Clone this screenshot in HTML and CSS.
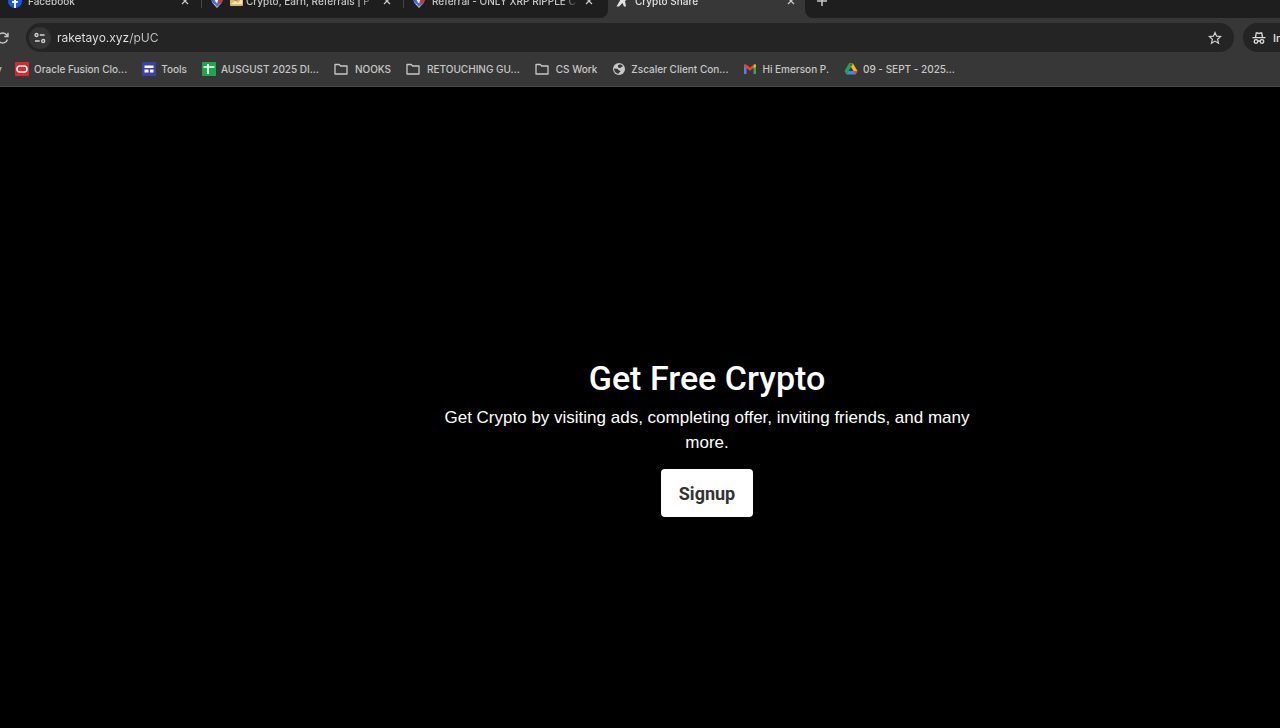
FILE: index.html
```html
<!DOCTYPE html>
<html lang="en">
<head>
  <meta charset="UTF-8" />
  <meta name="viewport" content="width=device-width, initial-scale=1.0" />
  <title>Crypto Share</title>
  <link rel="stylesheet" href="styles.css">
</head>
<body>

<!-- shared favicon -->
<svg class="defs" width="0" height="0" aria-hidden="true">
  <symbol id="coin" viewBox="0 0 14 14">
    <path d="M1 2.500 7 0l6 2.500-1 6L7 14 2 8.500z" fill="#c9cdda"/>
    <path d="M1 2.500 5 1v9L2.500 9z" fill="#3459c4"/>
    <path d="M8 1l5 1.500-1 6L8 12z" fill="#c9383b"/>
    <path d="M4 4l6 5-3 4-4-5z" fill="#4c6ed0"/>
    <path d="M4.500 2.500 8.500 5 7 9.500 5 7z" fill="#f2f2f2"/>
  </symbol>
  <symbol id="folder" viewBox="0 0 14 14">
    <path d="M1 2.500h4.200l1.500 1.500H13v8H1z" fill="none" stroke="#c7c7c7" stroke-width="1.300" stroke-linejoin="round"/>
  </symbol>
  <symbol id="close" viewBox="0 0 8 8">
    <path d="M1 1l6 6M7 1L1 7" stroke="#c7c7c7" stroke-width="1.300" fill="none"/>
  </symbol>
</svg>

<header class="browser">
  <div class="tab-strip">
    <div class="tab-group">
      <div class="tab">
        <svg class="icon" viewBox="0 0 14 14"><circle cx="7" cy="7" r="7" fill="#1657e8"/><path d="M6 14V9H4V7h2V5.500C6 3.700 7 3 8.500 3H10v2H9c-.7 0-1 .3-1 .9V7h2l-.4 2H8v5z" fill="#fff"/></svg>
        <span class="tab-title">Facebook</span>
        <button class="close" aria-label="Close tab"><svg width="8" height="8"><use href="#close"/></svg></button>
      </div>
      <div class="tab">
        <svg class="icon"><use href="#coin"/></svg>
        <span class="tab-title"><svg class="money" viewBox="0 0 13 10"><rect width="13" height="10" rx="1" fill="#d9b968"/><path d="M1 8l4-3 3 2 4-5v6z" fill="#f2e6bd"/><circle cx="6" cy="3" r="2" fill="#b08a35"/></svg>Crypto, Earn, Referrals | P</span>
        <button class="close" aria-label="Close tab"><svg width="8" height="8"><use href="#close"/></svg></button>
      </div>
      <div class="tab">
        <svg class="icon"><use href="#coin"/></svg>
        <span class="tab-title">Referral - ONLY XRP RIPPLE C</span>
        <button class="close" aria-label="Close tab"><svg width="8" height="8"><use href="#close"/></svg></button>
      </div>
    </div>
    <div class="tab active">
      <svg class="icon" viewBox="0 0 14 14"><path d="M3 1l7-1 1 4 2 1-3 2 1 5.500-2 0L7.500 9 4 12.500H1.500L5 6.500z" fill="#e3e3e3"/><path d="M6 4h2l-1 2z" fill="#373737"/></svg>
      <span class="tab-title">Crypto Share</span>
      <button class="close" aria-label="Close tab"><svg width="8" height="8"><use href="#close"/></svg></button>
    </div>
    <div class="tab-rest">
      <button class="new-tab" aria-label="New tab"><svg width="10" height="10" viewBox="0 0 10 10"><path d="M5 0v10M0 5h10" stroke="#c7c7c7" stroke-width="1.500"/></svg></button>
    </div>
  </div>

  <div class="toolbar">
    <button class="reload" aria-label="Reload"><svg width="12" height="12" viewBox="0 0 12 12"><path d="M10.500 7.500A5 5 0 1 1 9.800 3L11 4.300M11 .8v3.700H7.300" fill="none" stroke="#c7c7c7" stroke-width="1.400"/></svg></button>
    <div class="omnibox">
      <button class="site-info" aria-label="Site information"><svg width="12" height="12" viewBox="0 0 12 12"><g fill="none" stroke="#d6d6d6" stroke-width="1.300"><circle cx="2.500" cy="3" r="1.500"/><path d="M5.800 3H10.500M1 9h4.700"/><circle cx="9.200" cy="9" r="1.500"/></g></svg></button>
      <input class="url" type="text" value="raketayo.xyz/pUC" aria-label="Address">
      <button class="star" aria-label="Bookmark this page"><svg width="14" height="14" viewBox="0 0 14 14"><path d="M7 1.500l1.600 3.700 4 .3-3 2.700.9 4L7 10.100l-3.500 2.100.9-4-3-2.700 4-.3z" fill="none" stroke="#d0d0d0" stroke-width="1.200"/></svg></button>
    </div>
    <button class="incognito">
      <svg width="14" height="14" viewBox="0 0 14 14"><g fill="none" stroke="#dedede" stroke-width="1.300"><path d="M3.500 6l.8-4h1.500L7 2.500 8.200 2h1.500l.8 4M.5 6.700h13"/><circle cx="4" cy="10.500" r="1.800"/><circle cx="10" cy="10.500" r="1.800"/><path d="M5.800 10h2.400"/></g></svg>
      <span>Incognito</span>
    </button>
  </div>

  <nav class="bookmarks">
    <span class="bookmark-cut">y</span>
    <a href="#"><svg class="icon" viewBox="0 0 14 14"><rect width="14" height="14" fill="#d9292c"/><rect x="2" y="4" width="10" height="6" rx="3" fill="none" stroke="#fff" stroke-width="1.600"/></svg>Oracle Fusion Clo...</a>
    <a href="#"><svg class="icon" viewBox="0 0 14 14"><rect width="14" height="14" fill="#3c41a5"/><path d="M2.500 3.500h9v2.500h-9zM2.500 7.500h4v3h-4zM8 7.500h3.500v3H8z" fill="#fff"/></svg>Tools</a>
    <a href="#"><svg class="icon" viewBox="0 0 14 14"><rect width="14" height="14" fill="#22a350"/><path d="M1.500 5h11M6 2v10" stroke="#fff" stroke-width="1.700"/></svg>AUSGUST 2025 DI...</a>
    <a href="#" class="folder"><svg class="icon"><use href="#folder"/></svg>NOOKS</a>
    <a href="#" class="folder"><svg class="icon"><use href="#folder"/></svg>RETOUCHING GU...</a>
    <a href="#" class="folder"><svg class="icon"><use href="#folder"/></svg>CS Work</a>
    <a href="#"><svg class="icon" viewBox="0 0 14 14"><circle cx="7" cy="7" r="6" fill="#c7c7c7"/><path d="M6 3.200C7.500 2 10 2.500 11 4.500c-1.500-.3-1.500 1-2.500 1.300L7 6 6 5zM2 6.500l3 .3c1.500.2 1 1.700 2.500 1.700l1 .5c-.2 1.500-1.500 1-2 2.700C4 11.500 2 9.500 2 6.500z" fill="#373737"/></svg>Zscaler Client Con...</a>
    <a href="#"><svg class="icon" viewBox="0 0 14 14"><path d="M1 12V3l2.500 2v7z" fill="#4285f4"/><path d="M10.500 12V5L13 3v9z" fill="#34a853"/><path d="M1 3.200C1 2 2.500 2 3.200 2.600L7 5.500l3.500-2.700V6L7 8.800 1 4.500z" fill="#ea4335"/><path d="M10.500 2.800C11.500 2 13 2 13 3.300V4.500L10.500 6.300z" fill="#fbbc04"/></svg>Hi Emerson P.</a>
    <a href="#"><svg class="icon" viewBox="0 0 14 14"><path d="M5 1.500h4L4.700 9 2.500 12.500.5 9z" fill="#1ea362"/><path d="M5 1.500h4L13.500 9h-4z" fill="#fbbc04"/><path d="M5 1.500h4L7 5z" fill="#188038"/><path d="M4.500 9h9l-2 3.500h-9z" fill="#4285f4"/><path d="M9.500 9h4l-2 3.500z" fill="#ea4335"/></svg>09 - SEPT - 2025...</a>
  </nav>
</header>

<main class="hero">
  <div class="hero-content">
    <h1>Get Free Crypto</h1>
    <p>Get Crypto by visiting ads, completing offer, inviting friends, and many more.</p>
    <button class="signup">Signup</button>
  </div>
</main>

</body>
</html>
```
FILE: styles.css
```css
* { box-sizing: border-box; }
body { margin: 0; min-height: 100vh; background: #000; color: #fff; font-family: Roboto, sans-serif; overflow-x: hidden; }
button { border: 0; padding: 0; background: none; color: inherit; font-family: inherit; }
svg { display: block; flex: none; }
.defs { position: absolute; }
.icon { width: 14px; height: 14px; }

.browser { background: #373737; border-bottom: 1px solid #484848; overflow: hidden; color: #c7c7c7; font-family: Inter, sans-serif; font-size: 10px; font-weight: 500; }

/* tabs */
.tab-strip { display: flex; align-items: flex-end; height: 18px; overflow: hidden; }
.tab-group { display: flex; flex: none; height: 34px; margin-left: -2px; padding-right: 4px; background: #1e1e1e; border-bottom-right-radius: 8px; }
.tab { display: flex; align-items: center; flex: none; gap: 6px; width: 202px; height: 34px; padding: 0 11px 0 10px; }
.tab-group .tab + .tab { background: linear-gradient(#444, #444) 1px 50% / 1px 14px no-repeat; }
.active { width: 197px; padding: 0 10px 0 7px; color: #e3e3e3; }
.tab-title { display: flex; align-items: center; flex: 1; overflow: hidden; white-space: nowrap; -webkit-mask-image: linear-gradient(to right, #000 88%, transparent 100%); mask-image: linear-gradient(to right, #000 88%, transparent 100%); }
.money { width: 13px; height: 10px; margin-right: 3px; }
.tab-rest { display: flex; align-items: center; flex: 1; height: 34px; padding-left: 12px; background: #1e1e1e; border-bottom-left-radius: 8px; }

/* address bar */
.toolbar { display: flex; align-items: center; height: 39px; }
.reload { margin-left: -3px; }
.omnibox { display: flex; align-items: center; flex: 1; height: 29px; margin: 0 9px 0 17px; padding: 0 12px 0 3px; border-radius: 15px; background: #242424; }
.site-info { display: flex; align-items: center; justify-content: center; width: 22px; height: 22px; border-radius: 11px; background: #353535; }
/* host is brighter than the path */
.url { flex: 1; min-width: 0; margin-left: 6px; padding: 0; border: 0; outline: 0; background: linear-gradient(to right, #e6e6e6 72px, #c7c7c7 72px); -webkit-background-clip: text; background-clip: text; color: transparent; font: 12px Inter, sans-serif; }
.incognito { display: flex; align-items: center; flex: none; gap: 7px; width: 37px; height: 29px; padding-left: 9px; overflow: hidden; border-radius: 15px 0 0 15px; background: #242424; color: #e3e3e3; font-size: 11px; font-weight: 500; }

/* bookmarks bar */
.bookmarks { display: flex; gap: 15px; height: 29px; padding-top: 5px; white-space: nowrap; }
.bookmarks a { display: flex; align-items: center; gap: 5px; height: 14px; color: #c7c7c7; text-decoration: none; }
.bookmarks .folder { gap: 7px; }
.bookmark-cut { width: 4px; margin-left: -4px; line-height: 14px; }

/* landing page */
.hero { padding: 271px 0 0 134px; }
.hero-content { max-width: 540px; margin: 0 auto; text-align: center; }
h1 { margin: 0; font-size: 34px; line-height: 40px; font-weight: 500; }
p { margin: 7px 0 14px; font-family: "Liberation Sans", sans-serif; font-size: 17px; line-height: 25px; }
.signup { width: 92px; height: 48px; border-radius: 4px; background: #fff; color: #333; font-size: 18px; font-weight: 700; }
```
